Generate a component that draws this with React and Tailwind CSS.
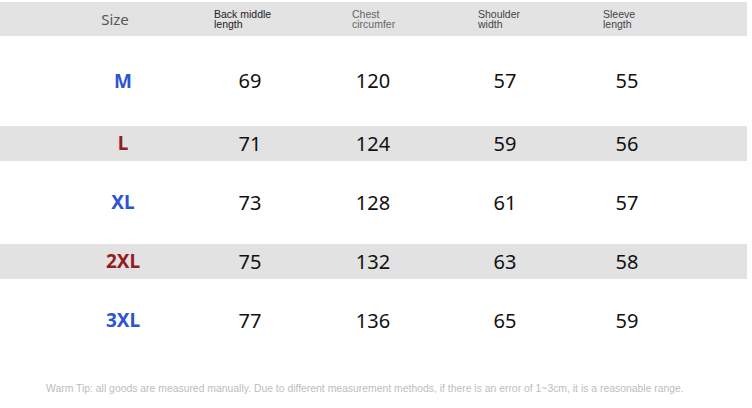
import React from "react";

const rows = [
  { size: "M", color: "text-[#2d55d2]", band: false, h: "h-[90px]", vals: ["69", "120", "57", "55"] },
  { size: "L", color: "text-[#951d22]", band: true, h: "h-[35px]", vals: ["71", "124", "59", "56"] },
  { size: "XL", color: "text-[#2d55d2]", band: false, h: "h-[83px]", vals: ["73", "128", "61", "57"] },
  { size: "2XL", color: "text-[#951d22]", band: true, h: "h-[35px]", vals: ["75", "132", "63", "58"] },
  { size: "3XL", color: "text-[#2d55d2]", band: false, h: "h-[83px]", vals: ["77", "136", "65", "59"] },
];

const numWidths = ["w-[140px]", "w-[106px]", "w-[158px]", "w-[86px]"];

const HeadLabel = ({ top, bottom, w, color }) => (
  <div className={`${w} ${color} font-['Liberation_Sans',Arial,sans-serif] text-[10.5px] leading-[10px]`}>
    <div>{top}</div>
    <div>{bottom}</div>
  </div>
);

const App = () => {
  return (
    <div className="w-[752px] h-[408px] bg-white pt-[2px] overflow-hidden">
      {/* header */}
      <div className="w-[747px] h-[34px] bg-[#e3e3e3] flex items-center">
        <div className="ml-[50px] w-[130px] text-center font-['Noto_Sans',sans-serif] text-[15px] text-[#555]">
          Size
        </div>
        <div className="ml-[34px] flex">
          <HeadLabel top="Back middle" bottom="length" w="w-[138px]" color="text-[#222]" />
          <HeadLabel top="Chest" bottom="circumfer" w="w-[126px]" color="text-[#666]" />
          <HeadLabel top="Shoulder" bottom="width" w="w-[125px]" color="text-[#444]" />
          <HeadLabel top="Sleeve" bottom="length" w="w-[100px]" color="text-[#444]" />
        </div>
      </div>

      {/* rows */}
      {rows.map((r) => (
        <div
          key={r.size}
          className={`${r.h} w-[747px] flex items-center ${r.band ? "bg-[#e2e2e2]" : ""}`}
        >
          <div
            className={`ml-[58px] w-[130px] mr-[-8px] text-center font-['Noto_Sans',sans-serif] font-bold text-[19px] ${r.color}`}
          >
            {r.size}
          </div>
          {r.vals.map((v, i) => (
            <div
              key={i}
              className={`${numWidths[i]} text-center font-['Noto_Sans',sans-serif] text-[20px] text-[#111]`}
            >
              {v}
            </div>
          ))}
        </div>
      ))}

      {/* footer */}
      <div className="h-[46px] flex items-center pl-[46px] pt-[8px]">
        <p className="font-['Liberation_Sans',Arial,sans-serif] text-[10.4px] text-[#bdbdbd] whitespace-nowrap">
          Warm Tip: all goods are measured manually. Due to different measurement methods, if there is an error of 1~3cm, it is a reasonable range.
        </p>
      </div>
    </div>
  );
};

export default App;
